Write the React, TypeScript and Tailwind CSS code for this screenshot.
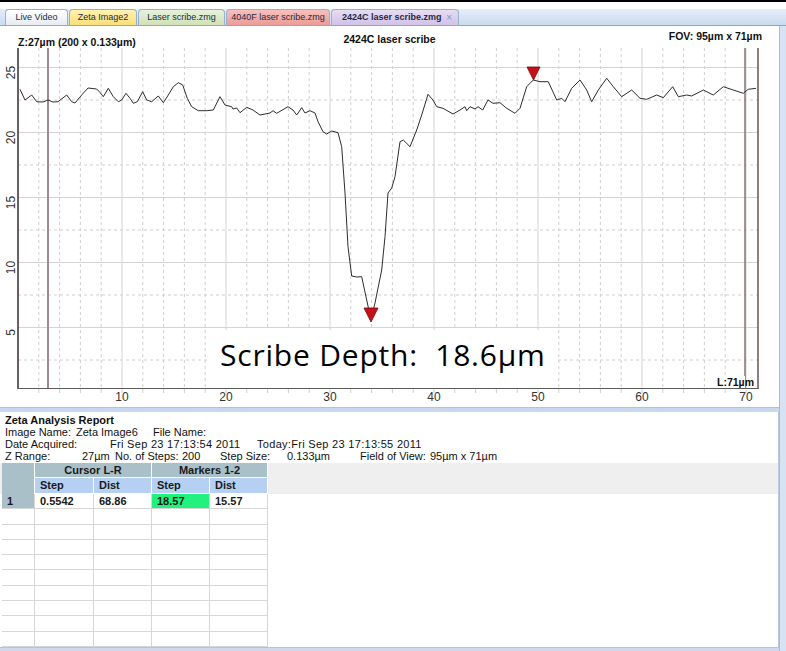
import React from "react";

// profile trace, page coords (x px, y px)
const CURVE: [number, number][] = [
  [20, 89.3], [25, 100], [31.7, 95], [36.7, 101.7], [43, 102], [48, 100], [53, 102], [58, 101.7],
  [66.7, 95], [71.7, 101.7], [75, 103], [81.7, 95], [88, 88], [96.7, 89], [100, 92.5], [103.3, 96.7],
  [108.3, 88.3], [113.3, 96.7], [118.3, 101.7], [121.7, 100], [126, 93.3], [130, 98.3], [133.3, 103.3],
  [137.3, 101.7], [142.7, 91.7], [146.7, 100], [151.7, 101.7], [158.3, 96], [163.3, 102.7], [168.3, 95],
  [173.3, 86.7], [178.3, 82.7], [182.7, 85], [187.3, 98.3], [191.7, 106.7], [198.3, 110.7], [206.7, 110.7],
  [213.3, 110], [220, 96.7], [225, 105], [231.7, 106.7], [233, 109], [236.7, 108], [240, 112.7],
  [246.7, 107.3], [253, 110], [260, 115], [270, 113], [273, 110.7], [276.7, 113.3], [288, 106.7],
  [293, 110], [296.7, 115], [301.7, 107.7], [305, 113], [310, 110.7], [315, 113], [318, 121.7],
  [323, 131.7], [326.7, 134], [331.7, 131], [338, 132.7], [341.7, 146.7], [345, 193], [348, 246.7],
  [351.7, 276], [356.7, 277], [361.7, 276.7], [366.7, 300], [371, 320], [375, 303], [381.7, 270],
  [385, 236.7], [388, 193], [391.7, 188], [395, 176.7], [400, 141.7], [403.3, 140], [410, 146.7],
  [416.7, 130], [421.7, 115], [428, 94.3], [433, 100], [436.7, 106.7], [443, 108.3], [453, 114],
  [460, 110], [465, 106.7], [466.7, 110.7], [470, 106.7], [475, 109], [478, 106.7], [482.7, 110],
  [488, 100], [493, 103.3], [500, 102.7], [506.7, 108.3], [515, 113.3], [520, 108.3], [526.7, 86.7],
  [533.3, 80], [540, 81.7], [548.3, 81.7], [556.7, 100], [561.7, 98.3], [565, 101.7], [571.7, 88.3],
  [580, 80], [586.7, 90], [591.7, 101.7], [598.3, 90], [606.7, 78.3], [613.3, 86.7], [621.7, 96.7],
  [631.7, 90], [640, 98.3], [646.7, 99.3], [656.7, 95], [663.3, 97.7], [672.7, 86.7], [678.3, 96.7],
  [686.7, 95], [691.7, 96], [703.3, 90], [713.3, 95], [723.3, 86.7], [733.3, 90], [743.3, 93.3],
  [748.3, 89.3], [756, 88.3],
];

const X = (u: number) => 18 + u * 10.4;
const Y = (v: number) => 392.5 - v * 13;

const dashedX = Array.from({ length: 35 }, (_, i) => (i + 1) * 2).filter((u) => u % 10 !== 0);
const solidX = [10, 20, 30, 40, 50, 60, 70];
const solidY = [5, 10, 15, 20, 25];
const dashedY = [2.5, 7.5, 12.5, 17.5, 22.5];

const tabs = [
  { label: "Live Video", cls: "w-[63px] from-[#ffffff] to-[#e6ebf2]" },
  { label: "Zeta Image2", cls: "w-[68px] from-[#fff2b0] to-[#f9df78]" },
  { label: "Laser scribe.zmg", cls: "w-[87px] from-[#e7f1da] to-[#cfe2b6]" },
  { label: "4040F laser scribe.zmg", cls: "w-[104px] from-[#f6c0bd] to-[#eb9b97]" },
];

function TabStrip() {
  return (
    <div className="h-[17px] border-b border-[#8ea8cb] bg-linear-to-b from-[#e6eefa] to-[#c9daf1] flex items-end pl-[5px] gap-px text-[9px] leading-[15px] text-[#1d2c45]">
      {tabs.map((t) => (
        <div
          key={t.label}
          className={`h-[16px] ${t.cls} bg-linear-to-b rounded-t-[4px] border border-b-0 border-[#9bb0cc] flex items-center justify-center`}
        >
          {t.label}
        </div>
      ))}
      <div className="h-[16px] w-[128px] bg-linear-to-b from-[#e6dcf3] to-[#d2c2e8] rounded-t-[4px] border border-b-0 border-[#9bb0cc] flex items-center justify-between pl-[10px] pr-[6px]">
        <span className="font-bold">2424C laser scribe.zmg</span>
        <span className="text-[#8a9ab0] text-[10px]">×</span>
      </div>
    </div>
  );
}

function Chart() {
  const pts = CURVE.map((p) => p.join(",")).join(" ");
  return (
    <svg width={779} height={359} viewBox="0 48 779 359" className="block">
      {dashedX.map((u) => (
        <line key={"dx" + u} x1={X(u)} x2={X(u)} y1={48} y2={388} stroke="#cfcfcf" strokeWidth={1} strokeDasharray="3 3" />
      ))}
      {dashedY.map((v) => (
        <line key={"dy" + v} x1={18} x2={758} y1={Y(v)} y2={Y(v)} stroke="#cfcfcf" strokeWidth={1} strokeDasharray="3 3" />
      ))}
      {solidX.map((u) => (
        <line key={"sx" + u} x1={X(u)} x2={X(u)} y1={48} y2={388} stroke="#d4d4d4" strokeWidth={1} />
      ))}
      {solidY.map((v) => (
        <line key={"sy" + v} x1={18} x2={758} y1={Y(v)} y2={Y(v)} stroke="#d4d4d4" strokeWidth={1} />
      ))}
      {dashedX.concat(solidX).map((u) => (
        <line key={"t" + u} x1={X(u)} x2={X(u)} y1={389} y2={393} stroke="#d0d0d0" strokeWidth={1} />
      ))}

      {/* cursors */}
      <line x1={48} x2={48} y1={48} y2={388} stroke="#a08a8f" strokeWidth={2} />
      <line x1={745} x2={745} y1={48} y2={388} stroke="#8d6f72" strokeWidth={1.5} />

      {/* axes */}
      <line x1={18} x2={18} y1={48} y2={389} stroke="#3a2b2b" strokeWidth={1.5} />
      <line x1={18} x2={758} y1={388.5} y2={388.5} stroke="#5b5b5b" strokeWidth={1} />
      <line x1={758} x2={758} y1={48} y2={389} stroke="#6e5252" strokeWidth={1.5} />

      <polyline points={pts} fill="none" stroke="#2e2e2e" strokeWidth={1} strokeLinejoin="round" />

      {/* markers */}
      <polygon points="364,308 378,308 371,322" fill="#c8101a" stroke="#6a0a0a" strokeWidth={0.8} />
      <polygon points="527,67 540,67 533.5,80" fill="#c8101a" stroke="#6a0a0a" strokeWidth={0.8} />

      {/* axis labels */}
      <g fontFamily="Liberation Sans, Arial, sans-serif" fontSize={12} fill="#333">
        {solidX.map((u) => (
          <text key={"lx" + u} x={X(u)} y={401} textAnchor="middle">
            {u}
          </text>
        ))}
        {solidY.map((v) => (
          <text key={"ly" + v} x={0} y={0} textAnchor="middle" transform={`translate(15 ${Y(v) + 5}) rotate(-90)`}>
            {v}
          </text>
        ))}
      </g>

      <rect x={716} y={376} width={29} height={12} fill="#fff" />
      <text x={717} y={386} fontFamily="Liberation Sans, Arial, sans-serif" fontSize={10.5} fontWeight="bold" fill="#111">
        L:71µm
      </text>
    </svg>
  );
}

function ChartPanel() {
  return (
    <div className="relative h-[381px] bg-white">
      <div className="h-[22px] grid grid-cols-[1fr_auto_1fr] text-[10.5px] font-bold leading-[12px] text-[#111]">
        <div className="pl-[18px] pt-[10px]">Z:27µm (200 x 0.133µm)</div>
        <div className="pt-[7px]">2424C laser scribe</div>
        <div className="justify-self-end pr-[17px] pt-[4px]">FOV: 95µm x 71µm</div>
      </div>
      <Chart />
      <div className="absolute left-[207px] top-[304px] w-[350px] h-[58px] bg-white pl-[13px] pt-[7px] font-['Open_Sans',sans-serif] text-[30px] tracking-[0.8px] leading-[36px] text-black whitespace-pre">
        Scribe Depth:  18.6µm
      </div>
    </div>
  );
}

const COLS = ["w-[33px]", "w-[59px]", "w-[58px]", "w-[58px]", "w-[58px]"];

function DataRow({ cells, first }: { cells: string[]; first?: boolean }) {
  return (
    <div className="flex h-[15.3px]">
      {cells.map((c, i) => (
        <div
          key={i}
          className={`${COLS[i]} h-full border-r border-b border-[#d6d6d6] pl-[5px] font-bold leading-[14px] ${
            i === 0 && first ? "bg-[#a9c0c8]" : i === 3 && first ? "bg-[#22f27d]" : "bg-white"
          }`}
        >
          {c}
        </div>
      ))}
    </div>
  );
}

function ResultsTable() {
  return (
    <div className="mt-px text-[11px] text-[#1a1a1a]">
      <div className="flex h-[31px] bg-[#efefef] pl-[2px]">
        <div className="w-[33px] h-full bg-[#a9c0c8] border-r border-white" />
        <div className="flex flex-col">
          <div className="flex h-[15px] font-bold leading-[14px]">
            <div className="w-[117px] bg-[#a9c0c8] border-r border-b border-white text-center">Cursor L-R</div>
            <div className="w-[116px] bg-[#a9c0c8] border-r border-b border-white text-center">Markers 1-2</div>
          </div>
          <div className="flex h-[16px] font-bold leading-[15px]">
            <div className="w-[59px] bg-[#b5d0f2] border-r border-b border-white pl-[5px]">Step</div>
            <div className="w-[58px] bg-[#b5d0f2] border-r border-b border-white pl-[5px]">Dist</div>
            <div className="w-[58px] bg-[#b5d0f2] border-r border-b border-white pl-[5px]">Step</div>
            <div className="w-[58px] bg-[#b5d0f2] border-r border-b border-white pl-[5px]">Dist</div>
          </div>
        </div>
      </div>
      <div className="pl-[2px]">
        <DataRow first cells={["1", "0.5542", "68.86", "18.57", "15.57"]} />
        {Array.from({ length: 9 }, (_, i) => (
          <DataRow key={i} cells={["", "", "", "", ""]} />
        ))}
      </div>
    </div>
  );
}

function ReportPanel() {
  return (
    <div className="h-[235px] bg-white border-r border-[#b9c9de] overflow-hidden text-[11px] leading-[12px] text-[#111]">
      <div className="pl-[5px] pt-[2px]">
        <div className="font-bold">Zeta Analysis Report</div>
        <div className="flex whitespace-pre">
          <span className="w-[71px] shrink-0">Image Name:</span>
          <span className="w-[77px] shrink-0">Zeta Image6</span>
          <span>File Name:</span>
        </div>
        <div className="flex whitespace-pre">
          <span className="w-[105px] shrink-0">Date Acquired:</span>
          <span className="w-[147px] shrink-0 tracking-[0.3px]">Fri Sep 23 17:13:54 2011</span>
          <span className="tracking-[0.3px]">Today:Fri Sep 23 17:13:55 2011</span>
        </div>
        <div className="flex whitespace-pre">
          <span className="w-[77px] shrink-0">Z Range:</span>
          <span className="w-[33px] shrink-0">27µm</span>
          <span className="w-[67px] shrink-0">No. of Steps:</span>
          <span className="w-[38px] shrink-0">200</span>
          <span className="w-[67px] shrink-0">Step Size:</span>
          <span className="w-[73px] shrink-0">0.133µm</span>
          <span className="w-[70px] shrink-0">Field of View:</span>
          <span>95µm x 71µm</span>
        </div>
      </div>
      <ResultsTable />
    </div>
  );
}

export default function App() {
  return (
    <div className="w-[786px] h-[651px] overflow-hidden bg-white font-['Liberation_Sans',Arial,sans-serif] text-[#111]">
      <div className="h-[2px] bg-black" />
      <div className="h-[7px] bg-white" />
      <TabStrip />
      <div className="flex h-[625px]">
        <div className="w-[779px] flex flex-col">
          <ChartPanel />
          <div className="h-[5px] bg-[#c8d8ee] border-t border-[#aec3df]" />
          <ReportPanel />
          <div className="h-[4px] bg-[#cfd8ee] border-t border-[#b4c2df]" />
        </div>
        <div className="flex-1 bg-[#d7e3f3] border-l border-[#a9bcd6]" />
      </div>
    </div>
  );
}
